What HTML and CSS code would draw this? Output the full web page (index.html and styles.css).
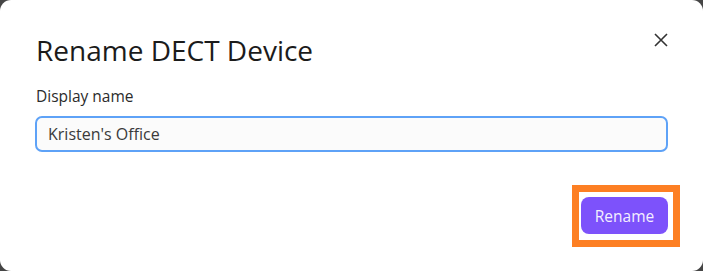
FILE: index.html
```html
<!DOCTYPE html>
<html>
<head>
<meta charset="utf-8">
<link rel="stylesheet" href="styles.css">
</head>
<body>
<div class="dialog">
  <div class="header">
    <h1 class="title">Rename DECT Device</h1>
    <button class="close" aria-label="Close">
      <svg width="14" height="14" viewBox="0 0 14 14"><path d="M1 1 L13 13 M13 1 L1 13" stroke="#333" stroke-width="1.6" fill="none"/></svg>
    </button>
  </div>
  <label class="label" for="name">Display name</label>
  <input class="input" id="name" value="Kristen's Office">
  <div class="footer">
    <button class="primary">Rename</button>
  </div>
  <div class="highlight"></div>
</div>
</body>
</html>
```
FILE: styles.css
```css
html, body { margin: 0; padding: 0; }
body {
  background: #454545;
  width: 703px;
  height: 271px;
  font-family: "Open Sans", "Noto Sans", sans-serif;
}
.dialog {
  position: relative;
  box-sizing: border-box;
  width: 703px;
  height: 271px;
  background: #fff;
  border-radius: 11px;
  padding: 32px 35px 0 35px;
  display: flex;
  flex-direction: column;
}
.header {
  display: flex;
  justify-content: space-between;
  align-items: flex-start;
}
.title {
  margin: 0 0 0 1px;
  font-size: 28px;
  font-weight: 400;
  color: #1b1b1b;
  line-height: 36px;
}
.close {
  border: 0;
  background: none;
  padding: 0;
  margin: 1px 0 0 0;
  width: 14px;
  height: 14px;
  display: flex;
}
.label {
  margin: 18px 0 0 1px;
  font-size: 15.5px;
  font-weight: 500;
  color: #2b2b2b;
  line-height: 20px;
}
.input {
  margin-top: 10px;
  box-sizing: border-box;
  width: 633px;
  height: 36px;
  border: 2px solid #5ea2f7;
  border-radius: 7px;
  background: #fbfbfb;
  padding: 0 11px;
  font-family: inherit;
  font-size: 16px;
  color: #3a3a3a;
  outline: none;
}
.footer {
  display: flex;
  justify-content: flex-end;
  margin-top: 45px;
}
.primary {
  width: 87px;
  height: 37px;
  border: 0;
  border-radius: 8px;
  background: #7d52fb;
  color: #f4efff;
  font-family: inherit;
  font-size: 15.5px;
  font-weight: 500;
}
.highlight {
  position: absolute;
  left: 572px;
  top: 185px;
  width: 108px;
  height: 62px;
  box-sizing: border-box;
  border: 7px solid #fd7f23;
}
```
